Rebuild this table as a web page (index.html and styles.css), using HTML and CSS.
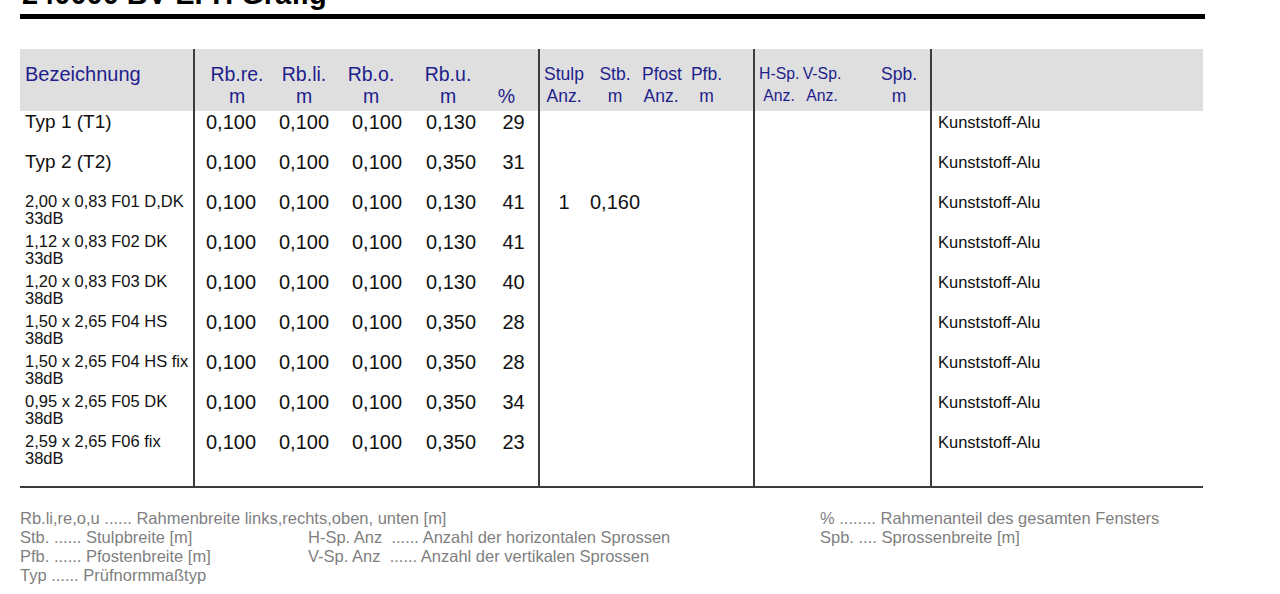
FILE: index.html
```html
<!DOCTYPE html>
<html lang="de">
<head>
<meta charset="utf-8">
<title>240000 BV EFH Grafig</title>
<link rel="stylesheet" href="styles.css">
</head>
<body>
<div class="page">
  <h1 class="title">240000 BV EFH Grafig</h1>

  <div class="grid">
    <div class="row head">
      <div class="c name">Bezeichnung</div>
      <div class="c sep rbre">Rb.re.<br>m</div>
      <div class="c">Rb.li.<br>m</div>
      <div class="c rbo">Rb.o.<br>m</div>
      <div class="c rbu">Rb.u.<br>m</div>
      <div class="c pct">&nbsp;<br>%</div>
      <div class="c sep sm">Stulp<br>Anz.</div>
      <div class="c sm">Stb.<br>m</div>
      <div class="c sm">Pfost<br>Anz.</div>
      <div class="c sm pfb">Pfb.<br>m</div>
      <div class="c sep sm hsp">H-Sp.<br>Anz.</div>
      <div class="c sm vsp">V-Sp.<br>Anz.</div>
      <div class="c sm spb">Spb.<br>m</div>
      <div class="c sep mat"></div>
    </div>

    <div class="row">
      <div class="c name big">Typ 1 (T1)</div>
      <div class="c sep num">0,100</div><div class="c num">0,100</div><div class="c num">0,100</div><div class="c num">0,130</div><div class="c num">29</div>
      <div class="c sep num"></div><div class="c num"></div><div class="c num"></div><div class="c num pfb"></div>
      <div class="c sep num"></div><div class="c num"></div><div class="c num spb"></div>
      <div class="c sep mat">Kunststoff-Alu</div>
    </div>
    <div class="row">
      <div class="c name big">Typ 2 (T2)</div>
      <div class="c sep num">0,100</div><div class="c num">0,100</div><div class="c num">0,100</div><div class="c num">0,350</div><div class="c num">31</div>
      <div class="c sep num"></div><div class="c num"></div><div class="c num"></div><div class="c num pfb"></div>
      <div class="c sep num"></div><div class="c num"></div><div class="c num spb"></div>
      <div class="c sep mat">Kunststoff-Alu</div>
    </div>
    <div class="row">
      <div class="c name">2,00 x 0,83 F01 D,DK<br>33dB</div>
      <div class="c sep num">0,100</div><div class="c num">0,100</div><div class="c num">0,100</div><div class="c num">0,130</div><div class="c num">41</div>
      <div class="c sep num">1</div><div class="c num">0,160</div><div class="c num"></div><div class="c num pfb"></div>
      <div class="c sep num"></div><div class="c num"></div><div class="c num spb"></div>
      <div class="c sep mat">Kunststoff-Alu</div>
    </div>
    <div class="row">
      <div class="c name">1,12 x 0,83 F02 DK<br>33dB</div>
      <div class="c sep num">0,100</div><div class="c num">0,100</div><div class="c num">0,100</div><div class="c num">0,130</div><div class="c num">41</div>
      <div class="c sep num"></div><div class="c num"></div><div class="c num"></div><div class="c num pfb"></div>
      <div class="c sep num"></div><div class="c num"></div><div class="c num spb"></div>
      <div class="c sep mat">Kunststoff-Alu</div>
    </div>
    <div class="row">
      <div class="c name">1,20 x 0,83 F03 DK<br>38dB</div>
      <div class="c sep num">0,100</div><div class="c num">0,100</div><div class="c num">0,100</div><div class="c num">0,130</div><div class="c num">40</div>
      <div class="c sep num"></div><div class="c num"></div><div class="c num"></div><div class="c num pfb"></div>
      <div class="c sep num"></div><div class="c num"></div><div class="c num spb"></div>
      <div class="c sep mat">Kunststoff-Alu</div>
    </div>
    <div class="row">
      <div class="c name">1,50 x 2,65 F04 HS<br>38dB</div>
      <div class="c sep num">0,100</div><div class="c num">0,100</div><div class="c num">0,100</div><div class="c num">0,350</div><div class="c num">28</div>
      <div class="c sep num"></div><div class="c num"></div><div class="c num"></div><div class="c num pfb"></div>
      <div class="c sep num"></div><div class="c num"></div><div class="c num spb"></div>
      <div class="c sep mat">Kunststoff-Alu</div>
    </div>
    <div class="row">
      <div class="c name">1,50 x 2,65 F04 HS fix<br>38dB</div>
      <div class="c sep num">0,100</div><div class="c num">0,100</div><div class="c num">0,100</div><div class="c num">0,350</div><div class="c num">28</div>
      <div class="c sep num"></div><div class="c num"></div><div class="c num"></div><div class="c num pfb"></div>
      <div class="c sep num"></div><div class="c num"></div><div class="c num spb"></div>
      <div class="c sep mat">Kunststoff-Alu</div>
    </div>
    <div class="row">
      <div class="c name">0,95 x 2,65 F05 DK<br>38dB</div>
      <div class="c sep num">0,100</div><div class="c num">0,100</div><div class="c num">0,100</div><div class="c num">0,350</div><div class="c num">34</div>
      <div class="c sep num"></div><div class="c num"></div><div class="c num"></div><div class="c num pfb"></div>
      <div class="c sep num"></div><div class="c num"></div><div class="c num spb"></div>
      <div class="c sep mat">Kunststoff-Alu</div>
    </div>
    <div class="row last">
      <div class="c name">2,59 x 2,65 F06 fix<br>38dB</div>
      <div class="c sep num">0,100</div><div class="c num">0,100</div><div class="c num">0,100</div><div class="c num">0,350</div><div class="c num">23</div>
      <div class="c sep num"></div><div class="c num"></div><div class="c num"></div><div class="c num pfb"></div>
      <div class="c sep num"></div><div class="c num"></div><div class="c num spb"></div>
      <div class="c sep mat">Kunststoff-Alu</div>
    </div>
  </div>

  <div class="legend">
    <div class="legend-left">
      <div class="lg full">Rb.li,re,o,u ...... Rahmenbreite links,rechts,oben, unten [m]</div>
      <div class="lg">Stb. ...... Stulpbreite [m]</div>
      <div class="lg">H-Sp. Anz  ...... Anzahl der horizontalen Sprossen</div>
      <div class="lg">Pfb. ...... Pfostenbreite [m]</div>
      <div class="lg">V-Sp. Anz  ...... Anzahl der vertikalen Sprossen</div>
      <div class="lg full">Typ ...... Prüfnormmaßtyp</div>
    </div>
    <div class="legend-right">
      <div class="lg">% ........ Rahmenanteil des gesamten Fensters</div>
      <div class="lg">Spb. .... Sprossenbreite [m]</div>
    </div>
  </div>
</div>
</body>
</html>
```

FILE: styles.css
```css
* { box-sizing: border-box; }

html, body {
  margin: 0;
  padding: 0;
  background: #ffffff;
  overflow: hidden;
}

body {
  font-family: "Liberation Sans", Arial, sans-serif;
  color: #111111;
}

.page {
  padding: 0 75px 0 20px;
  width: 1280px;
}

.title {
  margin: -20px 0 0 0;
  padding: 0 0 5px 2px;
  font-size: 29px;
  line-height: 29px;
  font-weight: bold;
  color: #000;
  border-bottom: 5px solid #000;
}

.grid {
  margin-top: 30px;
  width: 1183px;
  border-bottom: 2px solid #3c3c3c;
}

.row {
  display: grid;
  grid-template-columns: 173px 74px 74px 72px 76px 49px 50px 54px 38px 73px 46px 43px 88px 1fr;
  height: 40px;
}

.row.head {
  height: 62px;
  background: #dfdfdf;
}

.row.last {
  height: 55px;
}

.c {
  white-space: nowrap;
  text-align: center;
  font-size: 20px;
  line-height: 20px;
  padding-top: 1px;
}

.head .c {
  color: #1e1e8c;
  font-size: 19.5px;
  line-height: 22px;
  padding-top: 14px;
}

.head .c.sm {
  font-size: 17.5px;
}

.head .c.hsp,
.head .c.vsp {
  font-size: 15.8px;
}

.head .rbre { padding-left: 12px; }
.head .rbo { padding-right: 12px; }
.head .rbu { padding-right: 6px; }
.head .pct { padding-right: 14px; }
.head .hsp { padding-left: 4px; }
.head .vsp { padding-left: 3px; }

.sep {
  border-left: 2px solid #3c3c3c;
}

.c.name {
  text-align: left;
  padding-left: 5px;
  font-size: 16.5px;
  line-height: 17px;
  padding-top: 2px;
}

.head .c.name {
  font-size: 20px;
  line-height: 22px;
  padding-top: 14px;
}

.c.name.big {
  font-size: 19px;
  line-height: 20px;
  padding-top: 1px;
}

.pfb { padding-right: 20px; }
.spb { padding-left: 26px; }

.c.mat {
  text-align: left;
  padding-left: 6px;
  font-size: 16.5px;
  line-height: 18px;
  padding-top: 2px;
}

.legend {
  display: flex;
  margin-top: 21px;
  color: #7f7f7f;
  font-size: 16.5px;
  line-height: 19px;
}

.legend-left {
  width: 800px;
  display: grid;
  grid-template-columns: 288px 1fr;
}

.lg {
  white-space: pre;
}

.lg.full {
  grid-column: 1 / 3;
}
```
